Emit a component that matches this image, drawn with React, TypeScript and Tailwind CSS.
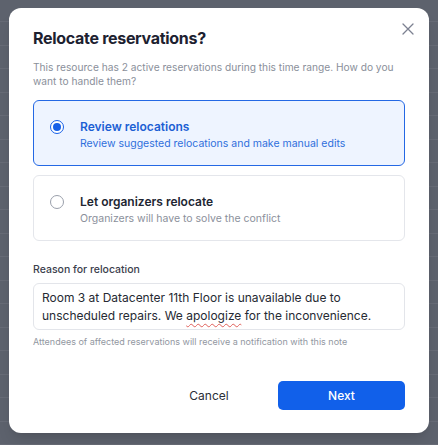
import React from "react";

const rows = [22, 24, 23, 24, 23, 24, 23, 24, 23, 24, 23, 24, 23, 24, 23, 24, 23, 24, 23];

function Radio({ checked }: { checked: boolean }) {
  return (
    <span
      className={
        "mt-[1px] flex h-[14px] w-[14px] shrink-0 items-center justify-center rounded-full border bg-white " +
        (checked ? "border-[#1760e8]" : "border-[#9a9fab]")
      }
    >
      {checked && <span className="h-[8px] w-[8px] rounded-full bg-[#1760e8]" />}
    </span>
  );
}

function Option({
  checked,
  title,
  desc,
}: {
  checked: boolean;
  title: string;
  desc: string;
}) {
  return (
    <div
      className={
        "flex h-[66px] items-start gap-[16px] rounded-[6px] border px-[16px] pt-[18px] " +
        (checked ? "border-[#2468e4] bg-[#eef4ff]" : "border-[#e4e6eb] bg-white")
      }
    >
      <Radio checked={checked} />
      <div className="flex flex-col">
        <span
          className={
            "text-[12px] font-semibold leading-[16px] " +
            (checked ? "text-[#1c5fd4]" : "text-[#222632]")
          }
        >
          {title}
        </span>
        <span
          className={
            "mt-[2px] text-[10.5px] leading-[14px] " +
            (checked ? "text-[#2f6fdc]" : "text-[#8b909b]")
          }
        >
          {desc}
        </span>
      </div>
    </div>
  );
}

export default function App() {
  return (
    <div className="relative h-[445px] w-[438px] overflow-hidden bg-[#5d626d] font-['Inter',sans-serif]">
      <div className="flex flex-col">
        {rows.map((h, i) => (
          <div key={i} style={{ height: h }} className="border-b border-[#676b76]" />
        ))}
      </div>

      <div className="absolute left-[9px] top-[8px] flex h-[425px] w-[420px] flex-col rounded-[12px] bg-white px-[24px] pt-[20px] shadow-lg">
        <button className="absolute right-[15px] top-[15px] flex h-[12px] w-[12px] items-center justify-center text-[#7c8191]">
          <svg width="12" height="12" viewBox="0 0 12 12" fill="none">
            <path d="M1 1l10 10M11 1L1 11" stroke="currentColor" strokeWidth="1.3" strokeLinecap="round" />
          </svg>
        </button>

        <h2 className="text-[16px] font-bold leading-[20px] tracking-[-0.3px] text-[#1d2130]">
          Relocate reservations?
        </h2>
        <p className="mt-[13px] text-[10.2px] leading-[13.5px] text-[#8a8f9a]">
          This resource has 2 active reservations during this time range. How do you want to handle them?
        </p>

        <div className="mt-[12px] flex flex-col gap-[9px]">
          <Option
            checked
            title="Review relocations"
            desc="Review suggested relocations and make manual edits"
          />
          <Option
            checked={false}
            title="Let organizers relocate"
            desc="Organizers will have to solve the conflict"
          />
        </div>

        <label className="mt-[22px] text-[10.5px] font-medium leading-[14px] text-[#3b404c]">
          Reason for relocation
        </label>
        <div className="mt-[6px] h-[47px] rounded-[6px] border border-[#e3e5ea] px-[8px] pt-[5px] text-[12px] leading-[18px] text-[#262a33]">
          Room 3 at Datacenter 11th Floor is unavailable due to unscheduled repairs. We{" "}
          <span className="underline decoration-[#e0605a] decoration-wavy decoration-[1px] underline-offset-[3px]">
            apologize
          </span>{" "}
          for the inconvenience.
        </div>
        <p className="mt-[6px] text-[9px] leading-[12px] text-[#9297a1]">
          Attendees of affected reservations will receive a notification with this note
        </p>

        <div className="mt-[33px] flex items-center justify-end gap-[14px]">
          <button className="h-[29px] w-[110px] text-[12px] leading-none text-[#2a2e38]">Cancel</button>
          <button className="h-[29px] w-[127px] rounded-[5px] bg-[#1160ea] text-[12px] font-medium leading-none text-white">
            Next
          </button>
        </div>
      </div>
    </div>
  );
}
